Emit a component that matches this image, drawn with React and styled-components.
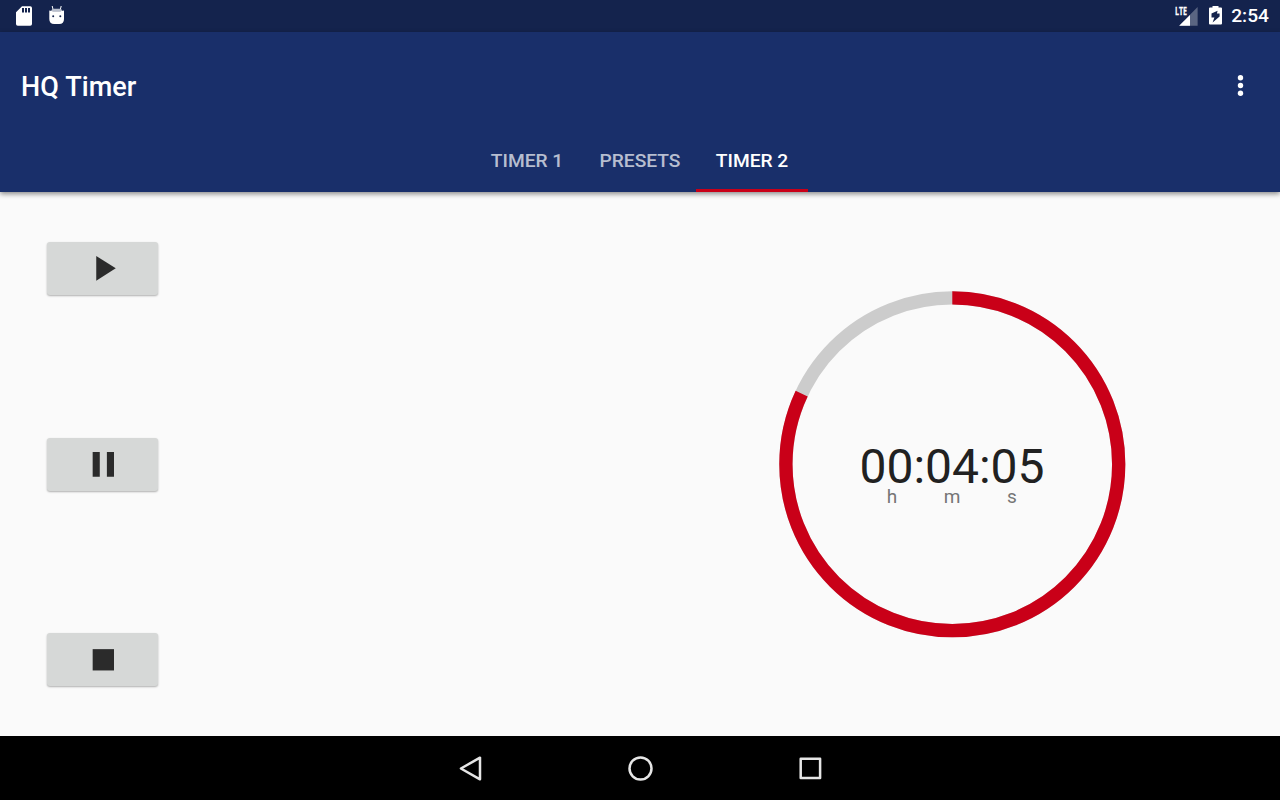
import React, { useState } from 'react';
import styled, { createGlobalStyle } from 'styled-components';

const GlobalStyle = createGlobalStyle`
  * {
    box-sizing: border-box;
  }
  body {
    margin: 0;
    background-color: #fafafa;
    font-family: Roboto, sans-serif;
  }
`;

const Screen = styled.div`
  width: 100vw;
  height: 100vh;
  display: flex;
  flex-direction: column;
  overflow: hidden;
`;

const StatusBar = styled.div`
  height: 32px;
  flex-shrink: 0;
  display: flex;
  align-items: center;
  justify-content: space-between;
  padding: 0 11px 0 16px;
  background-color: #14234d;
  color: white;
`;

const StatusGroup = styled.div`
  display: flex;
  align-items: center;
  gap: ${(props) => props.$gap};
`;

const Clock = styled.span`
  font-size: 19.2px;
  font-weight: 500;
  line-height: 32px;
  margin-left: -2px;
`;

const Header = styled.header`
  height: 160px;
  flex-shrink: 0;
  display: flex;
  flex-direction: column;
  background-color: #192f6a;
  color: white;
  box-shadow: 0 2px 5px rgba(0, 0, 0, 0.45);
  z-index: 1;
`;

const Toolbar = styled.div`
  height: 96px;
  display: flex;
  align-items: center;
  justify-content: space-between;
  padding: 11px 36px 0 21px;
`;

const Title = styled.h1`
  margin: 0;
  padding-top: 3px;
  font-size: 27px;
  font-weight: 500;
  line-height: 32px;
  letter-spacing: 0.1px;
`;

const MenuButton = styled.button`
  display: flex;
  padding: 0;
  border: none;
  background: none;
  cursor: pointer;
`;

const Tabs = styled.nav`
  height: 64px;
  display: flex;
  justify-content: center;
  padding-right: 2px;
`;

const Tab = styled.button`
  width: ${(props) => props.$width};
  padding: 4px 0 0;
  border: none;
  border-bottom: 3px solid ${(props) => (props.$active ? '#c90018' : 'transparent')};
  background: none;
  color: ${(props) => (props.$active ? 'white' : 'rgba(255, 255, 255, 0.7)')};
  font-family: inherit;
  font-size: 19.2px;
  font-weight: 500;
  text-transform: uppercase;
  white-space: nowrap;
  cursor: pointer;
`;

const Content = styled.main`
  flex: 1;
  display: flex;
  justify-content: space-between;
  padding: 50px 154px 49.5px 47px;
`;

const Controls = styled.div`
  display: flex;
  flex-direction: column;
  justify-content: space-between;
`;

const ControlButton = styled.button`
  width: 111px;
  height: 53.3px;
  display: flex;
  align-items: center;
  justify-content: center;
  padding: 0 0 0 2px;
  border: none;
  border-radius: 3px;
  background-color: #d6d8d7;
  box-shadow: 0 1px 2px rgba(0, 0, 0, 0.3);
  cursor: pointer;
`;

const Dial = styled.div`
  width: 347px;
  height: 347px;
  align-self: center;
  display: grid;
  place-items: center;

  > * {
    grid-area: 1 / 1;
  }
`;

const Readout = styled.div`
  display: flex;
  flex-direction: column;
  align-items: center;
  padding-top: 23px;
`;

const Time = styled.div`
  color: #212121;
  font-size: 48px;
  line-height: 44px;
  margin-left: -1px;
`;

const Units = styled.div`
  display: grid;
  grid-template-columns: repeat(3, 60px);
  margin: -1px 1px 0 0;
  color: #757575;
  font-size: 19px;
  line-height: 18px;
  text-align: center;
`;

const NavBar = styled.footer`
  height: 64px;
  flex-shrink: 0;
  display: flex;
  align-items: center;
  justify-content: center;
  gap: 138px;
  background-color: black;
`;

const tabs = [
  { label: 'Timer 1', width: '114px' },
  { label: 'Presets', width: '112px' },
  { label: 'Timer 2', width: '112px' },
];

const controls = [
  { name: 'Start', path: 'M8 5v14l11-7z' },
  { name: 'Pause', path: 'M6 19h4V5H6v14zm8-14v14h4V5h-4z' },
  { name: 'Stop', path: 'M6 5.7h12v12H6z' },
];

const RADIUS = 166.4;
const LENGTH = 2 * Math.PI * RADIUS;

const SdCardIcon = () => (
  <svg width="16" height="20" viewBox="0 0 16 20">
    <path
      fill="white"
      fillRule="evenodd"
      d="M6 .3h8.2A1.8 1.8 0 0 1 16 2.1v15.8a1.8 1.8 0 0 1-1.8 1.8H1.8A1.8 1.8 0 0 1 0 17.9V6.3zM6 2v4.5h2V2zm3 0v4.5h2V2zm3 0v4.5h2V2z"
    />
  </svg>
);

const RobotIcon = () => (
  <svg width="16" height="20" viewBox="0 0 16 20">
    <path d="M3.2 0l1 4M12.2 0l-1 4" stroke="white" strokeWidth="1" />
    <path d="M2 5Q2.8 2.7 4.8 2.7h6Q12.6 2.7 13.4 5z" fill="#b9bfcd" />
    <path
      fill="white"
      d="M.3 4.4Q7.7 6.2 15 4.4V13Q15 18 10.2 18h-5Q.3 18 .3 13z"
    />
    <circle cx="4.2" cy="10.3" r="1" fill="#14234d" />
    <circle cx="11.3" cy="10.3" r="1" fill="#14234d" />
  </svg>
);

const Label = styled.text`
  font-family: 'Open Sans', sans-serif;
  font-size: 11.3px;
  font-weight: 700;
  fill: white;
  stroke: white;
  stroke-width: 0.3px;
`;

const SignalIcon = () => (
  <svg width="24" height="20" viewBox="-1 0 24 20" overflow="visible">
    <path d="M22.6 1v18.7H4.2z" fill="white" opacity="0.3" />
    <path d="M15 9v10.7H4.2z" fill="white" />
    <path d="M0 0h12.4v9.5H0z" fill="#14234d" />
    <Label x="0" y="9" textLength="12" lengthAdjust="spacingAndGlyphs">LTE</Label>
  </svg>
);

const BatteryIcon = () => (
  <svg width="13" height="20" viewBox="0 0.7 13 20">
    <path
      fill="white"
      fillRule="evenodd"
      d="M3.5 0.7h6v1.6H12a1 1 0 0 1 1 1v14.9a1 1 0 0 1-1 1H1a1 1 0 0 1-1-1V3.3a1 1 0 0 1 1-1h2.5zM8.6 5.4L2.5 8.2v4h2.9L3.6 17.2l7-6.1V8.2H7.9z"
    />
  </svg>
);

const App = () => {
  const [active, setActive] = useState('Timer 2');
  const progress = 0.8195;

  return (
    <Screen>
      <GlobalStyle />
      <StatusBar>
        <StatusGroup $gap="16.5px">
          <SdCardIcon />
          <RobotIcon />
        </StatusGroup>
        <StatusGroup $gap="11px">
          <SignalIcon />
          <BatteryIcon />
          <Clock>2:54</Clock>
        </StatusGroup>
      </StatusBar>

      <Header>
        <Toolbar>
          <Title>HQ Timer</Title>
          <MenuButton aria-label="More options">
            <svg width="7" height="22" viewBox="0 0 7 22" fill="white">
              <circle cx="3.5" cy="2.7" r="2.7" />
              <circle cx="3.5" cy="10.5" r="2.7" />
              <circle cx="3.5" cy="18.3" r="2.7" />
            </svg>
          </MenuButton>
        </Toolbar>
        <Tabs>
          {tabs.map((tab) => (
            <Tab
              key={tab.label}
              $width={tab.width}
              $active={tab.label === active}
              onClick={() => setActive(tab.label)}
            >
              {tab.label}
            </Tab>
          ))}
        </Tabs>
      </Header>

      <Content>
        <Controls>
          {controls.map((control) => (
            <ControlButton key={control.name} aria-label={control.name}>
              <svg width="42.67" height="42.67" viewBox="0 0 24 24" fill="#2b2b2b">
                <path d={control.path} />
              </svg>
            </ControlButton>
          ))}
        </Controls>

        <Dial>
          <svg width="347" height="347" viewBox="0 0 347 347" fill="none" strokeWidth="13.3">
            <circle cx="173.3" cy="173.3" r={RADIUS} stroke="#cccccc" />
            <circle
              cx="173.3"
              cy="173.3"
              r={RADIUS}
              stroke="#c90018"
              strokeDasharray={`${LENGTH * progress} ${LENGTH}`}
              transform="rotate(-90 173.3 173.3)"
            />
          </svg>
          <Readout>
            <Time>00:04:05</Time>
            <Units>
              <span>h</span>
              <span>m</span>
              <span>s</span>
            </Units>
          </Readout>
        </Dial>
      </Content>

      <NavBar>
        <svg width="32" height="32" viewBox="0 0 32 32" fill="none" stroke="#e6e6e6" strokeWidth="2.5" strokeLinejoin="round">
          <path d="M26 5.7v21.6L6.9 16.5z" />
        </svg>
        <svg width="32" height="32" viewBox="0 0 32 32" fill="none" stroke="#e6e6e6" strokeWidth="2.5">
          <circle cx="16.5" cy="16.5" r="11" />
        </svg>
        <svg width="32" height="32" viewBox="0 0 32 32" fill="none" stroke="#e6e6e6" strokeWidth="2.5" strokeLinejoin="round">
          <path d="M6.7 6.7h19.4v19.4H6.7z" />
        </svg>
      </NavBar>
    </Screen>
  );
};

export default App;
